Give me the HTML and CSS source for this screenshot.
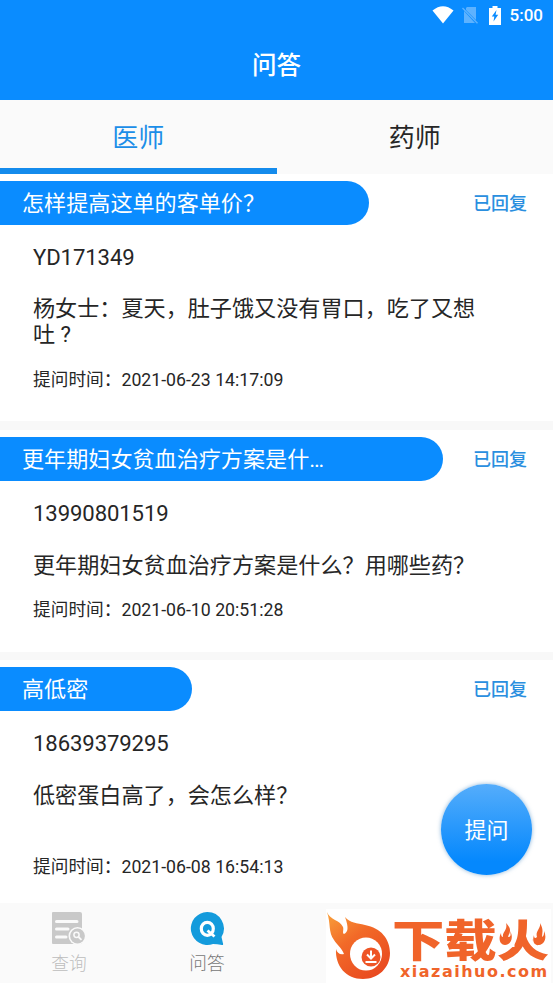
FILE: index.html
```
<!DOCTYPE html>
<html lang="zh-CN">
<head>
  <meta charset="UTF-8">
  <title>问答</title>
  <link rel="stylesheet" href="styles.css">
</head>
<body>

  <header class="header">
    <div class="status">
      <svg class="wifi" width="22" height="18" viewBox="0 0 22 18"><path d="M0.5 4.5Q11-4 21.5 4.5L11 17.5Z" fill="#fff"/></svg>
      <svg class="sim" width="17" height="18" viewBox="0 0 17 18">
        <path d="M5 1H14V14L4 4V2ZM2 5L13 17H2Z" fill="#5db2ff"/>
        <path d="M0.5 2L15.5 17.3" stroke="#5db2ff" stroke-width="1.4"/>
      </svg>
      <svg class="battery" width="12" height="19" viewBox="0 0 12 19">
        <path d="M3.500 0H8.500V2H12V19H0V2H3.500Z" fill="#fff"/>
        <path d="M7.500 4L2.800 10.500H5.300L4.500 15.500L9.200 8.800H6.600Z" fill="#0a8cff"/>
      </svg>
      <span class="clock">5:00</span>
    </div>
    <h1>问答</h1>
  </header>

  <nav class="tabs">
    <a class="tab active">医师</a>
    <a class="tab">药师</a>
  </nav>

  <main class="list">
    <section class="card">
      <div class="card-top">
        <h2 class="pill pill-mid">怎样提高这单的客单价？</h2>
        <span class="state">已回复</span>
      </div>
      <p class="user">YD171349</p>
      <p class="question">杨女士：夏天，肚子饿又没有胃口，吃了又想吐 ?</p>
      <p class="time">提问时间：2021-06-23 14:17:09</p>
    </section>

    <section class="card">
      <div class="card-top">
        <h2 class="pill pill-long">更年期妇女贫血治疗方案是什…</h2>
        <span class="state">已回复</span>
      </div>
      <p class="user">13990801519</p>
      <p class="question">更年期妇女贫血治疗方案是什么？用哪些药？</p>
      <p class="time">提问时间：2021-06-10 20:51:28</p>
    </section>

    <section class="card">
      <div class="card-top">
        <h2 class="pill pill-short">高低密</h2>
        <span class="state">已回复</span>
      </div>
      <p class="user">18639379295</p>
      <p class="question tall">低密蛋白高了，会怎么样？</p>
      <p class="time">提问时间：2021-06-08 16:54:13</p>
    </section>
  </main>

  <button class="ask">提问</button>

  <footer class="bottom">
    <a class="item">
      <svg width="36" height="36" viewBox="0 0 36 36">
        <path d="M2 1H29Q31 1 31 3V33H2Q1 33 1 32V2Q1 1 2 1Z" fill="#c9c9c9"/>
        <path d="M5.500 10.500H26M5.500 18H17M5.500 26H15" stroke="#fafafa" stroke-width="3" stroke-linecap="round"/>
        <circle cx="26.500" cy="25" r="9" fill="#fafafa"/>
        <circle cx="26.500" cy="25" r="7.400" fill="#c9c9c9"/>
        <circle cx="25.500" cy="23.800" r="2.600" fill="none" stroke="#fafafa" stroke-width="1.500"/>
        <path d="M27.500 26L30.500 28.800" stroke="#fafafa" stroke-width="1.800"/>
      </svg>
      <span>查询</span>
    </a>
    <a class="item active">
      <svg width="36" height="36" viewBox="0 0 36 36">
        <path d="M18 1A16.500 16.500 0 1 0 24 33Q28 33 33 34Q34.500 34 34 32.500L32.500 26A16.500 16.500 0 0 0 18 1Z" fill="#149bdc"/>
        <ellipse cx="18.300" cy="17.800" rx="6" ry="6.500" fill="none" stroke="#fff" stroke-width="3.200"/>
        <path d="M18.500 19.500L25.500 25.500" stroke="#fff" stroke-width="2.800"/>
      </svg>
      <span>问答</span>
    </a>
    <div class="brand">
      <svg class="flame" width="66" height="72" viewBox="0 0 66 72">
        <defs>
          <linearGradient id="fire" x1="0" y1="0" x2="0.7" y2="1">
            <stop offset="0" stop-color="#f9a13a"/>
            <stop offset="0.45" stop-color="#f26a28"/>
            <stop offset="1" stop-color="#e94a20"/>
          </linearGradient>
        </defs>
        <path d="M1 3C4 11 14 11 17 18C18 21 16 24 18 25C22 23 23 19 19 8C24 14 31 14 39 16C55 19 64 30 64 44C64 59 52 70 37 70C20 70 9 57 10 40C11 44 14 46 18 45C15 38 11 36 8 31C2 23 5 15 1 3Z" fill="url(#fire)"/>
        <ellipse cx="40" cy="45" rx="16" ry="16.500" fill="#fff"/>
        <circle cx="45" cy="48" r="9.500" fill="#ee5526"/>
        <path d="M45 41.500V48M41 45.500L45 49.500L49 45.500M39.500 53H50.500" fill="none" stroke="#fff" stroke-width="2"/>
      </svg>
      <div class="brand-text">
        <div class="brand-name">下载火</div>
        <div class="brand-url">xiazaihuo.com</div>
      </div>
      <svg class="sparks" width="50" height="26" viewBox="0 0 50 26">
        <path d="M0 0H15.500V25H0ZM33.500 0H50V25H33.500Z" fill="#fff"/>
        <path d="M7 1C14 8 10 11 9 15C12 15 12 12 11 9C15 15 12 23 6 23C1 23-1 17 2 11C2 14 3 15 4 15C3 10 9 8 7 1ZM41 1C45 8 43 11 43 15C45 14 45 12 45 9C48 15 46 22 40 23C35 24 33 19 35 13C35 16 36 17 38 15C36 9 42 7 41 1Z" fill="#f0642a"/>
      </svg>
    </div>
  </footer>

</body>
</html>
```
FILE: styles.css
```
body {
  position: relative;
  display: flex;
  flex-direction: column;
  height: 983px;
  margin: 0;
  background-color: #fff;
  color: #262626;
  font-family: Roboto, 'Noto Sans CJK SC', sans-serif;
  overflow: hidden;
}

h1, h2, p {
  margin: 0;
}

.header {
  height: 100px;
  background-color: #0a8cff;
  color: #fff;
}

.status {
  display: flex;
  align-items: center;
  justify-content: flex-end;
  height: 30px;
  padding-right: 10px;
}

.wifi {
  margin-right: 8px;
}

.sim {
  margin-right: 10px;
}

.battery {
  margin-right: 9px;
}

.clock {
  font-size: 17px;
  font-weight: 500;
}

h1 {
  font-size: 24.5px;
  font-weight: 500;
  line-height: 72px;
  text-align: center;
}

.tabs {
  display: flex;
  height: 74px;
  background-color: #fafafa;
}

.tab {
  flex: 1;
  box-sizing: border-box;
  height: 74px;
  font-size: 26px;
  line-height: 77px;
  text-align: center;
}

.tab.active {
  color: #1b8ee8;
  border-bottom: 6px solid #148bec;
}

.list {
  flex: 1;
}

.card {
  padding-top: 7px;
  padding-bottom: 30px;
  border-bottom: 9px solid #f8f8f8;
}

.card + .card {
  padding-bottom: 31px;
  border-bottom-width: 8px;
}

.card:last-child {
  padding-bottom: 0;
  border-bottom: none;
}

.card-top {
  display: flex;
  align-items: center;
  justify-content: space-between;
  height: 44px;
  padding-right: 26px;
}

.pill {
  box-sizing: border-box;
  height: 44px;
  padding-left: 22px;
  border-radius: 0 22px 22px 0;
  background-color: #0a8cff;
  color: #fff;
  font-size: 22.1px;
  font-weight: normal;
  line-height: 44px;
  white-space: nowrap;
}

.pill-mid {
  width: 369px;
}

.pill-long {
  width: 443px;
}

.pill-short {
  width: 192px;
}

.state {
  padding-bottom: 2px;
  color: #2a8fdf;
  font-size: 18px;
  font-weight: 500;
}

.user,
.question {
  padding: 0 66px 0 33px;
  font-size: 22.12px;
  line-height: 26px;
}

.user {
  margin-top: 19px;
  letter-spacing: -0.1px;
}

.question {
  margin-top: 25px;
}

.card + .card .question {
  margin-top: 26px;
}

.question.tall {
  min-height: 53px;
}

.time {
  margin-top: 22px;
  padding-left: 33px;
  font-size: 17.7px;
  line-height: 22px;
}

.card + .card .time {
  margin-top: 21px;
}

.ask {
  position: absolute;
  left: 441px;
  top: 784px;
  width: 91px;
  height: 91px;
  padding: 0 0 3px;
  border: none;
  border-radius: 50%;
  background: linear-gradient(#55adfb, #0588fd 85%);
  box-shadow: 0 0 4px rgba(60, 130, 190, 0.6);
  color: #fff;
  font-family: inherit;
  font-size: 22px;
}

.bottom {
  display: flex;
  flex: none;
  height: 80px;
  background-color: #fafafa;
}

.item {
  display: flex;
  flex-direction: column;
  align-items: center;
  width: 138px;
  padding-top: 8px;
  color: #bdbdbd;
  font-size: 17.7px;
  font-weight: 300;
  line-height: 34px;
}

.item.active {
  color: #777;
}

.brand {
  position: relative;
  display: flex;
  width: 225px;
  height: 74px;
  margin: 6px 2px 0 auto;
  background-color: #fff;
  color: #f0642a;
}

.flame {
  flex: none;
}

.brand-text {
  width: 153px;
}

.brand-name {
  height: 54px;
  font-family: 'Noto Sans CJK SC', sans-serif;
  font-size: 44px;
  font-weight: 900;
  line-height: 59px;
  white-space: nowrap;
  transform: scaleX(1.19);
  transform-origin: left;
}

.brand-url {
  padding-left: 8px;
  font-family: 'DejaVu Sans', sans-serif;
  font-size: 16px;
  font-weight: bold;
  letter-spacing: 1.5px;
  line-height: 18px;
}

/* flames on both sides of the last character */
.sparks {
  position: absolute;
  left: 173px;
  top: 13px;
}
```
